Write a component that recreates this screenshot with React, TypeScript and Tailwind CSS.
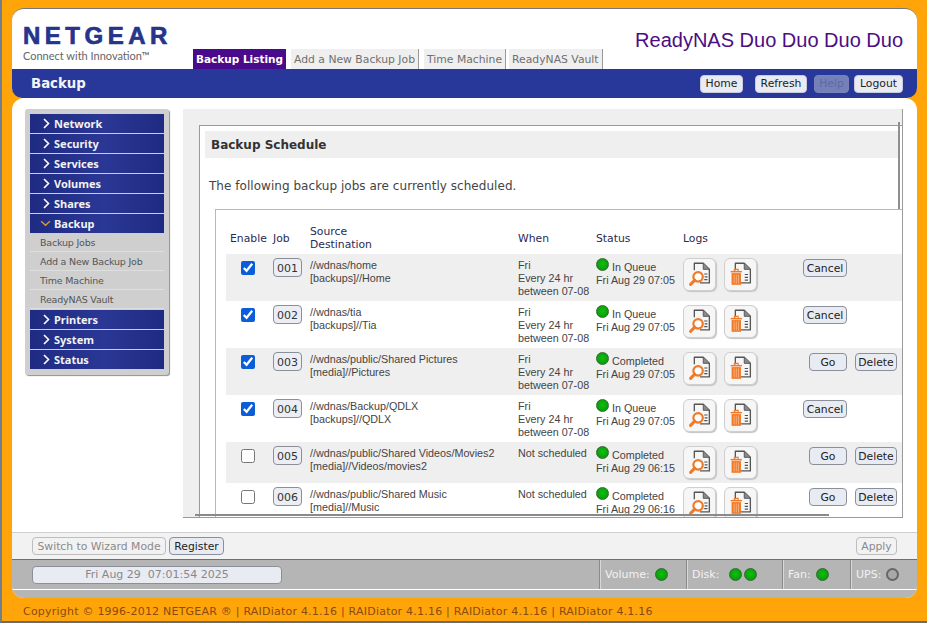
import React from "react";

const verdana = "font-['DejaVu_Sans',Verdana,sans-serif]";

const menuTop = ["Network", "Security", "Services", "Volumes", "Shares"];
const menuBottom = ["Printers", "System", "Status"];
const subItems = ["Backup Jobs", "Add a New Backup Job", "Time Machine", "ReadyNAS Vault"];

type Job = {
  id: string;
  on: boolean;
  src: string;
  dst: string;
  when: string[];
  status: string;
  time: string;
  running: boolean;
  h: string;
  alt: boolean;
};

const every = ["Fri", "Every 24 hr", "between 07-08"];

const jobs: Job[] = [
  { id: "001", on: true, src: "//wdnas/home", dst: "[backups]//Home", when: every, status: "In Queue", time: "Fri Aug 29 07:05", running: true, h: "h-[47px]", alt: true },
  { id: "002", on: true, src: "//wdnas/tia", dst: "[backups]//Tia", when: every, status: "In Queue", time: "Fri Aug 29 07:05", running: true, h: "h-[47px]", alt: false },
  { id: "003", on: true, src: "//wdnas/public/Shared Pictures", dst: "[media]//Pictures", when: every, status: "Completed", time: "Fri Aug 29 07:05", running: false, h: "h-[47px]", alt: true },
  { id: "004", on: true, src: "//wdnas/Backup/QDLX", dst: "[backups]//QDLX", when: every, status: "In Queue", time: "Fri Aug 29 07:05", running: true, h: "h-[47px]", alt: false },
  { id: "005", on: false, src: "//wdnas/public/Shared Videos/Movies2", dst: "[media]//Videos/movies2", when: ["Not scheduled"], status: "Completed", time: "Fri Aug 29 06:15", running: false, h: "h-[41px]", alt: true },
  { id: "006", on: false, src: "//wdnas/public/Shared Music", dst: "[media]//Music", when: ["Not scheduled"], status: "Completed", time: "Fri Aug 29 06:16", running: false, h: "h-[47px]", alt: false },
];

const tones = {
  normal: "border-[#8a8f99] bg-[#e9ebf2] text-[#222]",
  nav: "border-[#c8cbe0] bg-[#e9ebf2] text-[#222]",
  help: "border-[#7a83b8] bg-[#7480b8] text-[#5d69a3]",
  off: "border-[#bdbdbd] bg-[#f2f2f2] text-[#8a8a8a]",
};

function Btn({ children, tone = "normal", className = "" }: { children: React.ReactNode; tone?: keyof typeof tones; className?: string }) {
  return (
    <button className={`h-[18px] rounded-[4px] border pt-[2px] text-[10.8px] leading-none ${tones[tone]} ${verdana} ${className}`}>
      {children}
    </button>
  );
}

function Led({ className = "" }: { className?: string }) {
  return <span className={`block h-[13px] w-[13px] rounded-full border border-[#2f6b2f] bg-[radial-gradient(circle_at_50%_45%,#10c010,#078f07)] ${className}`} />;
}

function LogButton({ trash }: { trash?: boolean }) {
  return (
    <span className="flex h-[33px] w-[33px] items-center justify-center rounded-[6px] border border-[#cfcfcf] bg-[#f6f6f6] shadow-[1px_1px_1px_#c4c4c4]">
      <svg viewBox="0 0 33 33" className="h-[33px] w-[33px]">
        <path d="M11 12V4.5H20.5L27 11V25.5H17" fill="none" stroke="#555" strokeWidth="1.4" strokeLinejoin="round" />
        <path d="M20.5 4.5V11H27" fill="#8a8a8a" stroke="#555" strokeWidth="1" strokeLinejoin="round" />
        {trash ? (
          <>
            <path d="M21 16.5h3.5M21 19.5h3.5M21 22.5h3.5" stroke="#555" strokeWidth="1.2" />
            <path d="M6 13.5h12" stroke="#f07a28" strokeWidth="1.6" />
            <path d="M10 13v-2h4v2" fill="none" stroke="#f07a28" strokeWidth="1.2" />
            <path d="M7 15h10v12.5H7z" fill="#f07a28" />
            <path d="M9.7 16.5v9.5M12 16.5v9.5M14.3 16.5v9.5" stroke="#ffc9a3" strokeWidth="0.7" />
          </>
        ) : (
          <>
            <path d="M21.5 16h3.5M22 19h3M21.5 22h3.5" stroke="#555" strokeWidth="1.2" />
            <circle cx="15" cy="19" r="5" fill="#fff" stroke="#f07a28" strokeWidth="2.4" />
            <path d="M11.5 22.5L7 27" stroke="#f07a28" strokeWidth="3.2" strokeLinecap="round" />
          </>
        )}
      </svg>
    </span>
  );
}

function Chevron({ open }: { open?: boolean }) {
  if (open) {
    return (
      <svg viewBox="0 0 12 8" className="-ml-[1px] h-[7px] w-[11px]">
        <path d="M1 1.5L6 6L11 1.5" fill="none" stroke="#d99a3a" strokeWidth="1.6" />
      </svg>
    );
  }
  return (
    <svg viewBox="0 0 7 11" className="ml-[2px] h-[11px] w-[7px]">
      <path d="M1 1L5.5 5.5L1 10" fill="none" stroke="#fff" strokeWidth="1.6" />
    </svg>
  );
}

function MenuBar({ label, open }: { label: string; open?: boolean }) {
  return (
    <div className="flex h-[19px] items-center bg-[linear-gradient(90deg,#1f2b82,#2a3795_55%,#1f2b82)] pl-[11px]">
      <span className="flex w-[13px] items-center">
        <Chevron open={open} />
      </span>
      <span className="pt-[1px] font-['Noto_Sans',sans-serif] text-[11px] font-bold text-[#f2f2f2]">{label}</span>
    </div>
  );
}

function Sidebar() {
  return (
    <div className="flex h-[266px] w-[144px] shrink-0 flex-col gap-px rounded-[3px] bg-[#cfcfcf] pl-[5px] pr-[5px] pt-[5px] shadow-[1px_1px_1px_#8f8f8f]">
      {menuTop.map((m) => (
        <MenuBar key={m} label={m} />
      ))}
      <div className="flex flex-col">
        <MenuBar label="Backup" open />
        {subItems.map((s) => (
          <div key={s} className={`flex h-[19px] items-center border-b border-[#dedede] pl-[10px] pt-[2px] text-[9.5px] tracking-[-0.2px] text-[#555] ${verdana}`}>
            {s}
          </div>
        ))}
      </div>
      {menuBottom.map((m) => (
        <MenuBar key={m} label={m} />
      ))}
    </div>
  );
}

function JobRow({ job }: { job: Job }) {
  return (
    <div className={`flex ${job.h} shrink-0 items-start text-[10.75px] leading-[13px] text-[#444] font-['Liberation_Sans',Arial,sans-serif] ${job.alt ? "bg-[#efefef]" : "bg-white"}`}>
      <div className="flex w-[47px] justify-center pr-[3px] pt-[7px]">
        <input type="checkbox" readOnly checked={job.on} className="h-[14px] w-[14px] accent-[#0b5ed7]" />
      </div>
      <div className="w-[37px] pt-[4px]">
        <button className={`h-[19px] w-[29px] rounded-[4px] border border-[#8a8f99] bg-[#eceef3] pt-[1px] text-[11px] leading-none text-[#333] ${verdana}`}>{job.id}</button>
      </div>
      <div className="w-[208px] pt-[5px]">
        <div>{job.src}</div>
        <div>{job.dst}</div>
      </div>
      <div className="w-[78px] pt-[5px]">
        {job.when.map((w) => (
          <div key={w}>{w}</div>
        ))}
      </div>
      <div className="w-[87px] pt-[5px]">
        <div className="flex items-start">
          <Led className="mr-[3px] -mt-[1px]" />
          <span className="pt-[2px]">{job.status}</span>
        </div>
        <div>{job.time}</div>
      </div>
      <div className="flex w-[120px] gap-[8px] pt-[4px]">
        <LogButton />
        <LogButton trash />
      </div>
      <div className="flex flex-1 justify-end gap-[8px] pr-[5px] pt-[5px]">
        {job.running ? (
          <Btn className="mr-[50px] w-[44px]">Cancel</Btn>
        ) : (
          <>
            <Btn className="w-[38px]">Go</Btn>
            <Btn className="w-[42px]">Delete</Btn>
          </>
        )}
      </div>
    </div>
  );
}

function JobTable() {
  return (
    <div className="ml-[10px] mt-[16px] flex h-[310px] flex-col overflow-hidden border-l border-t border-[#b8b8b8] pl-[10px] pt-[14px]">
      <div className={`flex h-[30px] shrink-0 items-center pb-[2px] text-[10.8px] leading-[13px] text-[#2a2a55] ${verdana}`}>
        <div className="w-[47px] pl-[4px]">Enable</div>
        <div className="w-[37px]">Job</div>
        <div className="w-[208px]">
          Source
          <br />
          Destination
        </div>
        <div className="w-[78px]">When</div>
        <div className="w-[87px]">Status</div>
        <div>Logs</div>
      </div>
      {jobs.map((j) => (
        <JobRow key={j.id} job={j} />
      ))}
    </div>
  );
}

function StatusCell({ label, leds = 1, gray, gap = "mr-[5px]", className = "" }: { label: string; leds?: number; gray?: boolean; gap?: string; className?: string }) {
  return (
    <div className={`flex h-full items-center border-l border-[#8a8a8a] shadow-[inset_1px_0_0_#d8d8d8] pl-[5px] text-[11px] text-[#f2f2f2] ${verdana} ${className}`}>
      <span className={`pt-[2px] ${gap}`}>{label}</span>
      {gray ? (
        <span className="block h-[13px] w-[13px] rounded-full border-2 border-[#666] bg-[#a8a8a8]" />
      ) : (
        Array.from({ length: leds }).map((_, i) => <Led key={i} className="mr-[2px]" />)
      )}
    </div>
  );
}

export default function App() {
  return (
    <div className="h-[623px] w-[927px] overflow-hidden border-b-2 border-l-2 border-b-[#6b6b6b] border-l-[#6f7f8f] bg-[#ffa50a] pl-[10px] pr-[10px] pt-[8px]">
      {/* header */}
      <div className="h-[90px] rounded-[12px] border-t border-[#777] bg-white">
        <div className="flex h-[60px] items-end">
          <div className="flex w-[181px] shrink-0 flex-col self-start pl-[11px] pt-[15px]">
            <div className="font-['Liberation_Sans',Arial,sans-serif] text-[24px] font-bold leading-[24px] tracking-[4.5px] text-[#27348b] [-webkit-text-stroke:0.7px_#27348b]">NETGEAR</div>
            <div className="mt-[2px] font-['Lato',sans-serif] text-[11px] leading-[12px] text-[#666]">Connect with Innovation™</div>
          </div>
          <div className={`flex h-[20px] items-stretch text-[10.8px] ${verdana}`}>
            <div className="flex w-[93px] items-center justify-center bg-[#4a0a8c] pt-[2px] text-[10.5px] font-bold text-white">Backup Listing</div>
            <div className="ml-[5px] flex items-center border-r border-[#999] bg-[#efefef] pl-[3px] pr-[3px] pt-[2px] text-[#6f6f6f]">Add a New Backup Job</div>
            <div className="ml-[5px] flex items-center border-r border-[#999] bg-[#efefef] px-[3px] pt-[2px] text-[#6f6f6f]">Time Machine</div>
            <div className="ml-[3px] flex items-center border-r border-[#999] bg-[#efefef] px-[3px] pt-[2px] text-[#6f6f6f]">ReadyNAS Vault</div>
          </div>
          <div className="flex-1 self-start pr-[14px] pt-[19px] text-right font-['Liberation_Sans',Arial,sans-serif] text-[20px] leading-[24px] text-[#4b0e82]">ReadyNAS Duo Duo Duo Duo</div>
        </div>
        <div className="flex h-[29px] items-center rounded-b-[10px] bg-[#27389a] pl-[19px] pr-[14px]">
          <div className={`flex-1 text-[13.3px] font-bold text-[#f4f4f4] ${verdana}`}>Backup</div>
          <div className="flex gap-[5px]">
            <Btn tone="nav" className="mr-[7px] w-[43px]">Home</Btn>
            <Btn tone="nav" className="mr-[2px] w-[52px]">Refresh</Btn>
            <Btn tone="help" className="w-[35px]">Help</Btn>
            <Btn tone="nav" className="w-[49px]">Logout</Btn>
          </div>
        </div>
      </div>

      {/* body */}
      <div className="flex h-[500px] flex-col overflow-hidden rounded-[12px] bg-white">
        <div className="relative flex h-[434px] shrink-0 pl-[13px] pt-[11px]">
          <Sidebar />
          <div className="ml-[14px] flex h-[409px] w-[720px] flex-col overflow-hidden border-b border-r border-[#9a9a9a] bg-[#efefef] pl-[16px] pt-[16px]">
            <div className="flex h-[393px] flex-col border-l border-t border-[#9a9a9a] bg-white pl-[5px] pt-[5px]">
              <div className={`mr-[2px] flex h-[27px] shrink-0 items-center bg-[#efefef] pl-[6px] pt-[1px] text-[12px] font-bold text-[#333] ${verdana}`}>Backup Schedule</div>
              <div className={`mt-[21px] pl-[4px] text-[12px] leading-[14px] tracking-[0.04px] text-[#444] ${verdana}`}>The following backup jobs are currently scheduled.</div>
              <JobTable />
            </div>
          </div>
          {/* stray redraw lines over the panel */}
          <div className="absolute left-[183px] top-[416px] h-[2px] w-[634px] bg-[#8a8a8a]" />
          <div className="absolute left-[886px] top-[24px] h-[87px] w-[2px] bg-[#8f8f8f]" />
        </div>

        {/* action bar */}
        <div className="flex h-[27px] shrink-0 items-center border-t border-[#cfcfcf] bg-[#f2f2f2] pl-[20px] pr-[20px]">
          <Btn tone="off" className="w-[134px]">Switch to Wizard Mode</Btn>
          <Btn className="ml-[3px] w-[55px]">Register</Btn>
          <Btn tone="off" className="ml-auto w-[41px]">Apply</Btn>
        </div>

        {/* status bar */}
        <div className="flex h-[31px] shrink-0 items-center border-b border-t border-b-white border-t-[#6f6f6f] bg-[#b5b5b5] pl-[20px]">
          <div className={`flex h-[18px] w-[250px] items-center justify-center whitespace-pre rounded-[4px] border border-[#8a8f99] bg-[#e9ebf2] pt-[2px] text-[11px] text-[#888] ${verdana}`}>Fri Aug 29  07:01:54 2025</div>
          <div className="ml-[317px] flex h-full">
            <StatusCell label="Volume:" className="w-[87px]" />
            <StatusCell label="Disk:" leds={2} gap="mr-[10px]" className="w-[96px]" />
            <StatusCell label="Fan:" className="w-[68px]" />
            <StatusCell label="UPS:" gray className="w-[66px]" />
          </div>
        </div>
        <div className="h-[8px] shrink-0 rounded-b-[12px] bg-[#b5b5b5]" />
      </div>

      {/* copyright */}
      <div className={`whitespace-nowrap pl-[11px] pt-[7px] text-[11px] leading-[14px] tracking-[0.22px] text-[#8a4b12] ${verdana}`}>
        Copyright © 1996-2012 NETGEAR ® | RAIDiator 4.1.16 | RAIDiator 4.1.16 | RAIDiator 4.1.16 | RAIDiator 4.1.16
      </div>
    </div>
  );
}
